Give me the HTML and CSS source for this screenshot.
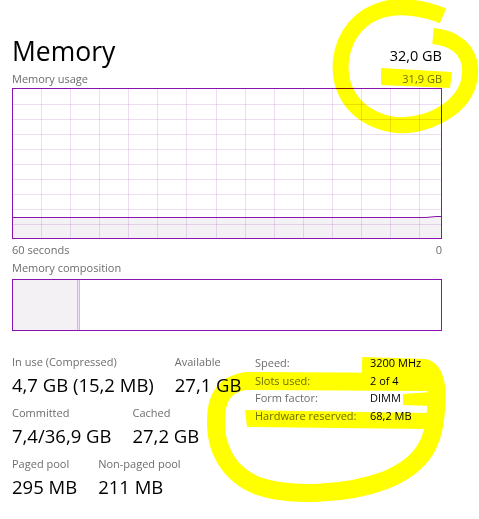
FILE: index.html
```html
<!DOCTYPE html>
<html lang="en">
<head>
<meta charset="utf-8">
<title>Memory</title>
<link rel="stylesheet" href="styles.css">
</head>
<body>
<main class="page">
  <header class="head">
    <h1 class="title">Memory</h1>
    <span class="total">32,0 GB</span>
  </header>
  <div class="row-labels">
    <span class="label">Memory usage</span>
    <span class="label">31,9 GB</span>
  </div>
  <svg class="chart" width="430" height="151" viewBox="0 0 430 151">
    <rect x="0" y="129" width="430" height="22" fill="#f3f1f4"/>
    <g stroke="rgba(139,18,174,0.15)" stroke-width="1">
      <line x1="29.5" y1="0" x2="29.5" y2="151"/>
      <line x1="58.5" y1="0" x2="58.5" y2="151"/>
      <line x1="87.5" y1="0" x2="87.5" y2="151"/>
      <line x1="116.5" y1="0" x2="116.5" y2="151"/>
      <line x1="145.5" y1="0" x2="145.5" y2="151"/>
      <line x1="174.5" y1="0" x2="174.5" y2="151"/>
      <line x1="204.5" y1="0" x2="204.5" y2="151"/>
      <line x1="233.5" y1="0" x2="233.5" y2="151"/>
      <line x1="262.5" y1="0" x2="262.5" y2="151"/>
      <line x1="291.5" y1="0" x2="291.5" y2="151"/>
      <line x1="320.5" y1="0" x2="320.5" y2="151"/>
      <line x1="349.5" y1="0" x2="349.5" y2="151"/>
      <line x1="378.5" y1="0" x2="378.5" y2="151"/>
      <line x1="407.5" y1="0" x2="407.5" y2="151"/>
      <line x1="0" y1="16.5" x2="430" y2="16.5"/>
      <line x1="0" y1="31.5" x2="430" y2="31.5"/>
      <line x1="0" y1="46.5" x2="430" y2="46.5"/>
      <line x1="0" y1="61.5" x2="430" y2="61.5"/>
      <line x1="0" y1="76.5" x2="430" y2="76.5"/>
      <line x1="0" y1="91.5" x2="430" y2="91.5"/>
      <line x1="0" y1="106.5" x2="430" y2="106.5"/>
      <line x1="0" y1="121.5" x2="430" y2="121.5"/>
      <line x1="0" y1="136.5" x2="430" y2="136.5"/>
    </g>
    <polyline points="0,129.5 414,129.5 424,128.5 430,128.5" fill="none" stroke="#8b12ae" stroke-width="1"/>
    <rect x="0.5" y="0.5" width="429" height="150" fill="none" stroke="#8b12ae" stroke-width="1"/>
  </svg>
  <div class="row-labels axis">
    <span class="label">60 seconds</span>
    <span class="label">0</span>
  </div>
  <div class="label comp-title">Memory composition</div>
  <div class="comp">
    <div class="comp-inuse"></div>
    <div class="comp-sep"></div>
  </div>

  <section class="stats">
    <div class="stats-left">
      <div class="stat-row">
        <div class="stat">
          <span class="label">In use (Compressed)</span>
          <span class="value">4,7 GB (15,2 MB)</span>
        </div>
        <div class="stat">
          <span class="label">Available</span>
          <span class="value">27,1 GB</span>
        </div>
      </div>
      <div class="stat-row">
        <div class="stat">
          <span class="label">Committed</span>
          <span class="value">7,4/36,9 GB</span>
        </div>
        <div class="stat">
          <span class="label">Cached</span>
          <span class="value">27,2 GB</span>
        </div>
      </div>
      <div class="stat-row">
        <div class="stat">
          <span class="label">Paged pool</span>
          <span class="value">295 MB</span>
        </div>
        <div class="stat">
          <span class="label">Non-paged pool</span>
          <span class="value">211 MB</span>
        </div>
      </div>
    </div>
    <dl class="props">
      <dt>Speed:</dt><dd>3200 MHz</dd>
      <dt>Slots used:</dt><dd>2 of 4</dd>
      <dt>Form factor:</dt><dd>DIMM</dd>
      <dt>Hardware reserved:</dt><dd>68,2 MB</dd>
    </dl>
  </section>
</main>

<svg class="marker" width="479" height="519" viewBox="0 0 479 519" aria-hidden="true">
  <g fill="none" stroke="#ffff00" stroke-linejoin="round">
    <path d="M443,16 C425,8 400,5 385,9 C360,15 344,35 341,60 C338,88 352,112 382,122 C402,129 428,124 447,111 C463,100 471,85 470,68 C469,50 455,38 433,36" stroke-width="16"/>
    <path d="M362,366 L425,368 C436,372 438,390 436,410 C434,442 424,464 386,480 C346,495 290,497 258,486 C228,474 215,448 216,420 C216,400 222,385 245,381 L432,382" stroke-width="18"/>
  </g>
  <g fill="#ffff00">
    <polygon points="381,68 452,72 450,88 381,85"/>
    <polygon points="245,410 427,413 425,429 247,427"/>
    <polygon points="403,394 432,392 432,406 403,405"/>
  </g>
</svg>
</body>
</html>
```

FILE: styles.css
```css
html, body {
  margin: 0;
  padding: 0;
  background: #ffffff;
}

body {
  font-family: "Open Sans", "Noto Sans", sans-serif;
  color: #000000;
  position: relative;
  width: 479px;
  height: 519px;
  overflow: hidden;
}

.page {
  width: 430px;
  margin-left: 12px;
  padding-top: 33px;
}

.head {
  display: flex;
  justify-content: space-between;
  align-items: baseline;
  height: 36px;
}

.title {
  margin: 0;
  font-size: 26.5px;
  font-weight: 400;
  line-height: 36px;
}

.total {
  font-size: 14.5px;
  line-height: 20px;
}

.label {
  font-size: 11px;
  line-height: 15px;
  color: #6d6d6d;
}

.row-labels {
  display: flex;
  justify-content: space-between;
  height: 15px;
  margin-top: 2px;
}

.chart {
  display: block;
  margin-top: 2px;
}

.axis {
  margin-top: 3px;
}

.comp-title {
  margin-top: 3px;
  height: 15px;
}

.comp {
  margin-top: 4px;
  height: 52px;
  box-sizing: border-box;
  border: 1px solid #8b12ae;
  display: flex;
}

.comp-inuse {
  width: 64px;
  background: #f3f1f4;
}

.comp-sep {
  width: 1px;
  background: #efe3f3;
  border-left: 1px solid #d8b6e2;
  border-right: 1px solid #d8b6e2;
}

.stats {
  display: flex;
  margin-top: 23px;
}

.stats-left {
  width: 243px;
  display: flex;
  flex-direction: column;
}

.stat-row {
  display: flex;
  gap: 21px;
  height: 51px;
}

.stat {
  display: flex;
  flex-direction: column;
}

.stat .label {
  height: 15px;
}

.value {
  margin-top: 3px;
  font-size: 18.5px;
  line-height: 25px;
  white-space: nowrap;
}

.props {
  margin: 0;
  display: grid;
  grid-template-columns: 115px auto;
  grid-auto-rows: 17.6px;
  font-size: 11px;
  line-height: 17.6px;
}

.props dt {
  color: #6d6d6d;
}

.props dd {
  margin: 0;
  color: #000000;
}

.marker {
  position: absolute;
  left: 0;
  top: 0;
  pointer-events: none;
  mix-blend-mode: multiply;
}
```
